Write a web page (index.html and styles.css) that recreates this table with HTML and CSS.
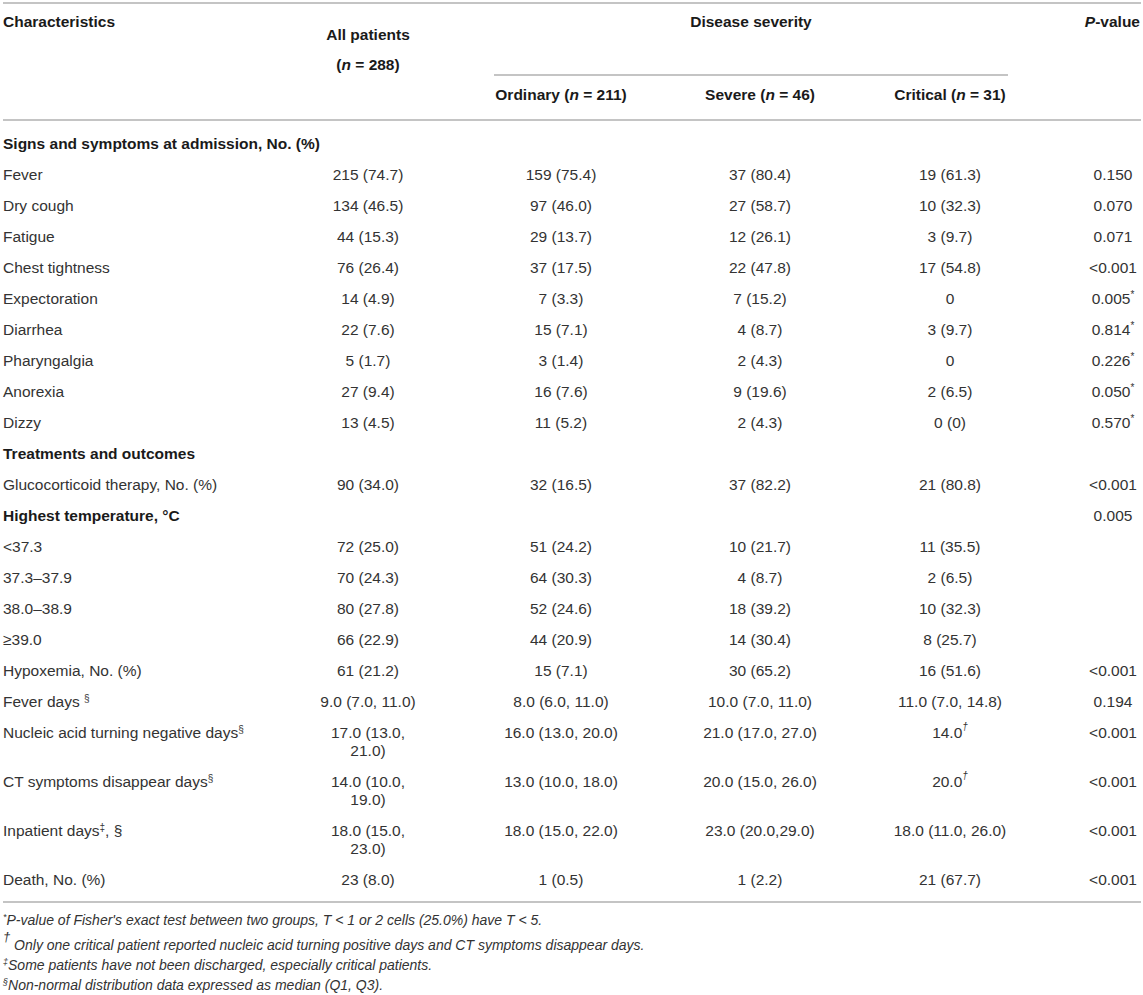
FILE: index.html
```html
<!DOCTYPE html>
<html lang="en">
<head>
<meta charset="utf-8">
<title>Table</title>
<link rel="stylesheet" href="styles.css">
</head>
<body>
<div class="page">
<table class="data">
<colgroup>
<col class="c-label"><col class="c-all"><col class="c-ord"><col class="c-sev"><col class="c-crit"><col class="c-p">
</colgroup>
<thead>
<tr class="h1">
<th class="lab" rowspan="2">Characteristics</th>
<th class="all" rowspan="2"><div class="all-line">All patients</div><div class="all-line">(<i>n</i> = 288)</div></th>
<th class="sev" colspan="3"><div class="sev-title">Disease severity</div><div class="sev-rule"></div></th>
<th class="p" rowspan="2"><i>P</i>-value</th>
</tr>
<tr class="h2">
<th>Ordinary (<i>n</i> = 211)</th>
<th>Severe (<i>n</i> = 46)</th>
<th>Critical (<i>n</i> = 31)</th>
</tr>
</thead>
<tbody>
<tr class="first"><td class="sec" colspan="6">Signs and symptoms at admission, No. (%)</td></tr>
<tr><td class="lab">Fever</td><td class="all">215 (74.7)</td><td>159 (75.4)</td><td>37 (80.4)</td><td>19 (61.3)</td><td class="p">0.150</td></tr>
<tr><td class="lab">Dry cough</td><td class="all">134 (46.5)</td><td>97 (46.0)</td><td>27 (58.7)</td><td>10 (32.3)</td><td class="p">0.070</td></tr>
<tr><td class="lab">Fatigue</td><td class="all">44 (15.3)</td><td>29 (13.7)</td><td>12 (26.1)</td><td>3 (9.7)</td><td class="p">0.071</td></tr>
<tr><td class="lab">Chest tightness</td><td class="all">76 (26.4)</td><td>37 (17.5)</td><td>22 (47.8)</td><td>17 (54.8)</td><td class="p">&lt;0.001</td></tr>
<tr><td class="lab">Expectoration</td><td class="all">14 (4.9)</td><td>7 (3.3)</td><td>7 (15.2)</td><td>0</td><td class="p">0.005<sup>*</sup></td></tr>
<tr><td class="lab">Diarrhea</td><td class="all">22 (7.6)</td><td>15 (7.1)</td><td>4 (8.7)</td><td>3 (9.7)</td><td class="p">0.814<sup>*</sup></td></tr>
<tr><td class="lab">Pharyngalgia</td><td class="all">5 (1.7)</td><td>3 (1.4)</td><td>2 (4.3)</td><td>0</td><td class="p">0.226<sup>*</sup></td></tr>
<tr><td class="lab">Anorexia</td><td class="all">27 (9.4)</td><td>16 (7.6)</td><td>9 (19.6)</td><td>2 (6.5)</td><td class="p">0.050<sup>*</sup></td></tr>
<tr><td class="lab">Dizzy</td><td class="all">13 (4.5)</td><td>11 (5.2)</td><td>2 (4.3)</td><td>0 (0)</td><td class="p">0.570<sup>*</sup></td></tr>
<tr><td class="sec" colspan="6">Treatments and outcomes</td></tr>
<tr><td class="lab">Glucocorticoid therapy, No. (%)</td><td class="all">90 (34.0)</td><td>32 (16.5)</td><td>37 (82.2)</td><td>21 (80.8)</td><td class="p">&lt;0.001</td></tr>
<tr><td class="sec" colspan="5">Highest temperature, °C</td><td class="p">0.005</td></tr>
<tr><td class="lab">&lt;37.3</td><td class="all">72 (25.0)</td><td>51 (24.2)</td><td>10 (21.7)</td><td>11 (35.5)</td><td class="p"></td></tr>
<tr><td class="lab">37.3–37.9</td><td class="all">70 (24.3)</td><td>64 (30.3)</td><td>4 (8.7)</td><td>2 (6.5)</td><td class="p"></td></tr>
<tr><td class="lab">38.0–38.9</td><td class="all">80 (27.8)</td><td>52 (24.6)</td><td>18 (39.2)</td><td>10 (32.3)</td><td class="p"></td></tr>
<tr><td class="lab">≥39.0</td><td class="all">66 (22.9)</td><td>44 (20.9)</td><td>14 (30.4)</td><td>8 (25.7)</td><td class="p"></td></tr>
<tr><td class="lab">Hypoxemia, No. (%)</td><td class="all">61 (21.2)</td><td>15 (7.1)</td><td>30 (65.2)</td><td>16 (51.6)</td><td class="p">&lt;0.001</td></tr>
<tr><td class="lab">Fever days <sup>§</sup></td><td class="all">9.0 (7.0, 11.0)</td><td>8.0 (6.0, 11.0)</td><td>10.0 (7.0, 11.0)</td><td>11.0 (7.0, 14.8)</td><td class="p">0.194</td></tr>
<tr><td class="lab">Nucleic acid turning negative days<sup>§</sup></td><td class="all">17.0 (13.0, 21.0)</td><td>16.0 (13.0, 20.0)</td><td>21.0 (17.0, 27.0)</td><td>14.0<sup class="dag">†</sup></td><td class="p">&lt;0.001</td></tr>
<tr><td class="lab">CT symptoms disappear days<sup>§</sup></td><td class="all">14.0 (10.0, 19.0)</td><td>13.0 (10.0, 18.0)</td><td>20.0 (15.0, 26.0)</td><td>20.0<sup class="dag">†</sup></td><td class="p">&lt;0.001</td></tr>
<tr><td class="lab">Inpatient days<sup>‡</sup>, §</td><td class="all">18.0 (15.0, 23.0)</td><td>18.0 (15.0, 22.0)</td><td>23.0 (20.0,29.0)</td><td>18.0 (11.0, 26.0)</td><td class="p">&lt;0.001</td></tr>
<tr class="last"><td class="lab">Death, No. (%)</td><td class="all">23 (8.0)</td><td>1 (0.5)</td><td>1 (2.2)</td><td>21 (67.7)</td><td class="p">&lt;0.001</td></tr>
</tbody>
</table>
<div class="notes">
<p class="note"><sup>*</sup>P-value of Fisher's exact test between two groups, T &lt; 1 or 2 cells (25.0%) have T &lt; 5.</p>
<p class="note"><sup class="big">†</sup> Only one critical patient reported nucleic acid turning positive days and CT symptoms disappear days.</p>
<p class="note"><sup>‡</sup>Some patients have not been discharged, especially critical patients.</p>
<p class="note"><sup>§</sup>Non-normal distribution data expressed as median (Q1, Q3).</p>
</div>
</div>
</body>
</html>
```

FILE: styles.css
```css
html, body {
  margin: 0;
  padding: 0;
  background: #ffffff;
}
body {
  font-family: "Liberation Sans", Arial, Helvetica, sans-serif;
  color: #333333;
}
.page {
  padding: 2px 2px 0 3px;
}
table.data {
  width: 1138px;
  table-layout: fixed;
  border-collapse: collapse;
  font-size: 15.5px;
  line-height: 18px;
  border-top: 2px solid #c4c4c4;
  border-bottom: 2px solid #c4c4c4;
}
col.c-label { width: 270px; }
col.c-all { width: 190px; }
col.c-ord { width: 196px; }
col.c-sev { width: 202px; }
col.c-crit { width: 178px; }
col.c-p { width: 102px; }

thead {
  border-bottom: 2px solid #c4c4c4;
}
th {
  font-weight: bold;
  color: #1a1a1a;
  vertical-align: top;
  padding: 0;
  line-height: 19px;
}
th.lab {
  text-align: left;
  padding-top: 8px;
}
th.all {
  text-align: center;
  padding: 16px 45px 0;
}
.all-line {
  line-height: 30px;
}
th.sev {
  text-align: center;
  padding: 8px 31px 0;
}
.sev-title {
  line-height: 19px;
}
.sev-rule {
  margin-top: 43px;
  border-top: 2px solid #c4c4c4;
}
th.p {
  text-align: right;
  padding-top: 8px;
  padding-right: 1px;
}
tr.h2 th {
  text-align: center;
  padding: 9px 0 15px;
}

td {
  padding: 6px 0 7px;
  text-align: center;
  vertical-align: top;
}
td.lab {
  text-align: left;
}
td.all {
  padding-left: 45px;
  padding-right: 45px;
}
td.sec {
  text-align: left;
  font-weight: bold;
  color: #1a1a1a;
}
td.p {
  text-align: center;
  padding-left: 46px;
}
tr.first td {
  padding-top: 14px;
}
tr.last td {
  padding-bottom: 12px;
}
sup {
  font-size: 10px;
  line-height: 0;
  vertical-align: 5px;
}
td.p sup {
  font-size: 10px;
  vertical-align: 6px;
}
sup.dag {
  font-style: italic;
  vertical-align: 8px;
}

.notes {
  padding-top: 7px;
}
.note {
  margin: 0;
  font-size: 14px;
  line-height: 20px;
  font-style: italic;
  color: #333333;
}
.note sup {
  font-size: 9px;
}
.note sup.big {
  font-size: 13px;
  line-height: 1;
  vertical-align: 9px;
}
```
